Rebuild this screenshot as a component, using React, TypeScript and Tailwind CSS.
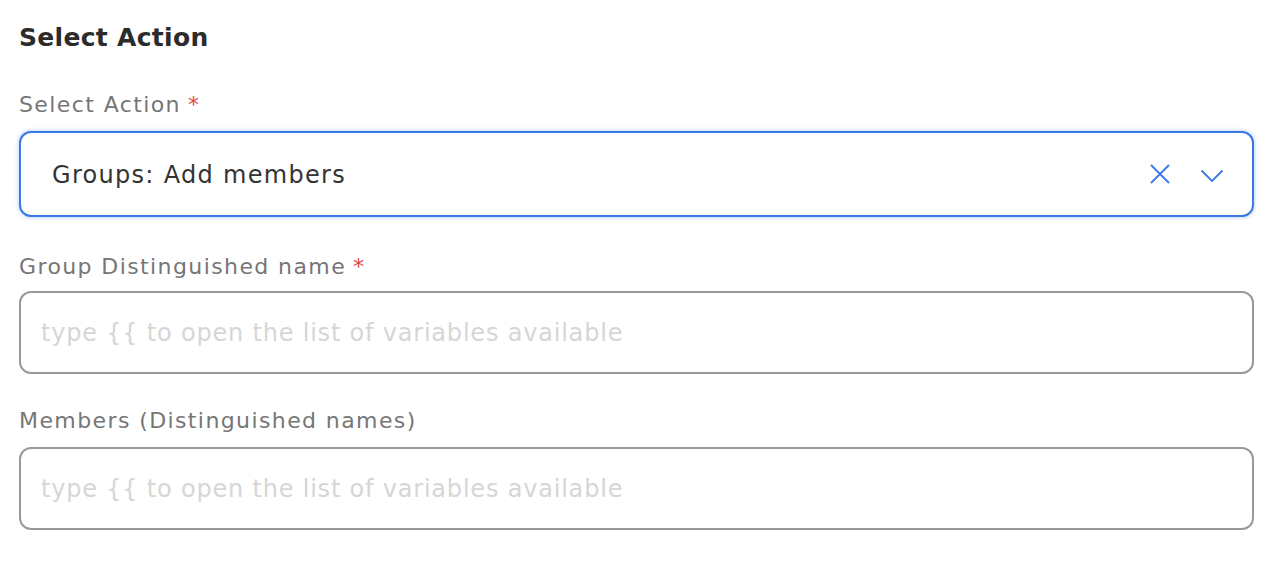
const font = { fontFamily: '"DejaVu Sans", "Open Sans", sans-serif' };

function Label({ text, required }: { text: string; required?: boolean }) {
  return (
    <div className="h-[30px] text-[22px] leading-[30px] tracking-[1.4px] text-[#767676]">
      {text}
      {required && <span className="ml-[7px] text-[#e5453b]">*</span>}
    </div>
  );
}

function TextField() {
  return (
    <div className="flex h-[83px] items-center rounded-[12px] border-2 border-[#999999] bg-white px-[20px]">
      <input
        className="w-full bg-transparent text-[24px] tracking-[0.8px] text-[#333] outline-none placeholder:text-[#d6d6d6]"
        placeholder="type {{ to open the list of variables available"
      />
    </div>
  );
}

export default function App() {
  return (
    <div className="min-h-[562px] bg-white pl-[19px] pr-[22px] pt-[22px] text-[#333]" style={font}>
      <h2 className="h-[32px] text-[25px] leading-[32px] tracking-[0.3px] font-bold text-[#2b2b2b]">Select Action</h2>

      <div className="mt-[36px]">
        <Label text="Select Action" required />
      </div>
      <div className="mt-[11px] flex h-[86px] items-center rounded-[12px] border-2 border-[#3a78e6] bg-white pl-[31px] pr-[28px] shadow-[0_0_4px_rgba(58,120,230,0.45)]">
        <span className="flex-1 pt-px text-[24px] tracking-[1.3px] text-[#333]">Groups: Add members</span>
        <svg width="20" height="20" viewBox="0 0 20 20" className="text-[#3a78e6]">
          <path d="M1 1L19 19M19 1L1 19" stroke="currentColor" strokeWidth="1.8" fill="none" />
        </svg>
        <svg width="24" height="14" viewBox="0 0 24 14" className="ml-[30px] mt-[4px] text-[#3a78e6]">
          <path d="M1.5 1.5L12 12L22.5 1.5" stroke="currentColor" strokeWidth="1.8" fill="none" />
        </svg>
      </div>

      <div className="mt-[35px]">
        <Label text="Group Distinguished name" required />
      </div>
      <div className="mt-[9px]">
        <TextField />
      </div>

      <div className="mt-[32px]">
        <Label text="Members (Distinguished names)" />
      </div>
      <div className="mt-[11px]">
        <TextField />
      </div>
    </div>
  );
}
